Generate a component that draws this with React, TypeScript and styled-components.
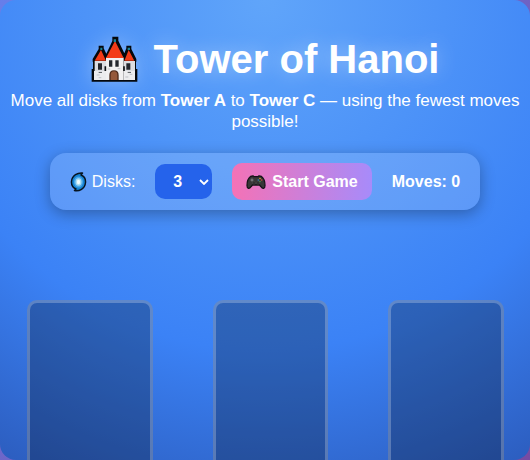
import React, { useState } from "react";
import styled, { createGlobalStyle } from "styled-components";

const GlobalStyle = createGlobalStyle`
  * { box-sizing: border-box; }
  body {
    margin: 0;
    min-height: 100vh;
    background: linear-gradient(135deg, #667eea 0%, #764ba2 100%);
    font-family: "Liberation Sans", Arial, sans-serif;
    color: #fff;
  }
`;

const Game = styled.main`
  display: flex;
  flex-direction: column;
  align-items: center;
  height: 100vh;
  overflow: hidden;
  border-radius: 16px;
  background: radial-gradient(circle at top, #60a5fa 0%, #3b82f6 66%, #1e3a8a 132%);
`;

const Title = styled.h1`
  display: flex;
  align-items: center;
  gap: 16px;
  margin: 36px 0 8px;
  font-size: 40px;
  line-height: 46px;
  text-shadow: 0 0 20px rgba(255, 255, 255, 0.4);
`;

const CastleIcon = styled.svg`
  width: 47px;
  height: 46px;
  filter: drop-shadow(0 0 10px rgba(255, 255, 255, 0.3));
`;

const Intro = styled.p`
  margin: 0 0 21px;
  font-size: 17px;
  line-height: 21px;
  text-align: center;
`;

const Controls = styled.section`
  display: flex;
  align-items: center;
  gap: 20px;
  padding: 10px 20px;
  border-radius: 16px;
  background: rgba(255, 255, 255, 0.15);
  box-shadow: 0 4px 15px rgba(0, 0, 0, 0.3);
  font-size: 16px;
  white-space: nowrap;
`;

const DiskLabel = styled.label`
  display: flex;
  align-items: center;
  gap: 5px;
`;

const SmallIcon = styled.svg<{ $width: number }>`
  width: ${({ $width }) => $width}px;
  height: 20px;
`;

const SelectBox = styled.div`
  display: grid;
  align-items: center;
  justify-items: end;

  & > * { grid-area: 1 / 1; }
  & > svg {
    margin-right: 3px;
    pointer-events: none;
  }
`;

const DiskSelect = styled.select`
  appearance: none;
  width: 57px;
  height: 35px;
  padding: 0 18px;
  border: 0;
  border-radius: 10px;
  background: #2563eb;
  color: #fff;
  font: bold 16px "Liberation Sans", Arial, sans-serif;
`;

const StartButton = styled.button`
  display: flex;
  align-items: center;
  gap: 6px;
  height: 37px;
  padding: 0 14px;
  border: 0;
  border-radius: 10px;
  background: linear-gradient(90deg, #f472b6, #a78bfa);
  color: #fff;
  font: bold 16px "Liberation Sans", Arial, sans-serif;
  cursor: pointer;
`;

const Moves = styled.output`
  font-weight: bold;
`;

const Towers = styled.section`
  display: grid;
  grid-template-columns: 126fr 115fr 116fr;
  gap: 60px;
  flex: 1;
  width: 100%;
  margin-top: 90px;
  padding: 0 26px 0 27px;
`;

const Tower = styled.div`
  height: 260px;
  border: 3px solid rgba(255, 255, 255, 0.24);
  border-radius: 10px;
  background: rgba(0, 0, 0, 0.25);
`;

const Castle = () => (
  <CastleIcon viewBox="40 31 141 138" aria-hidden="true">
    <path
      d="M42 168V130h4v-22h-1v-8l18-30V60h15v8l8 16 18-38V33h18v12l18 38 6-15v-8h15v10l15 30v8h-1v22h4v38Z"
      fill="#05080c"
    />
    <path d="M51 106h34v34H51Zm88 0h33v34h-33Z" fill="#dcdde1" />
    <path d="M85 96h53v67H85Z" fill="#f1f0f1" />
    <path d="M49 136h14v5h10v-5h12v27H49Zm89 0h12v5h10v-5h12v27h-34Z" fill="#ececee" />
    <path d="m51 105 19-32 15 32Zm34-8 27-51 26 51Zm55 8 13-32 17 32Z" fill="#f33b17" />
    <path d="M108 41h7v8h-7M68 66h6v7h-6m82-7h7v7h-7" fill="#17839a" />
    <path
      d="M94 104h10v19H94m19-19h10v19h-10M61 113h12v19H61m85-19h12v19h-12"
      fill="#24272d"
    />
    <path d="M83 122v14m56-14v14" stroke="#101216" strokeWidth="5" />
    <path d="M95 163v-15q0-14 14-14t14 14v15Z" fill="#4d2a1b" />
    <path d="M99 163v-15q0-11 10-11t10 11v15Z" fill="#95583a" />
    <path d="M57 148h9m-3 8h8m72-2h9m4-8h8M90 130h8m22-1h8" stroke="#bfc1c7" strokeWidth="3" />
  </CastleIcon>
);

const Cyclone = () => (
  <SmallIcon $width={17} viewBox="0 0 17 20" aria-hidden="true">
    <path
      d="M12.5 1C8 .5 2 3 1.5 9.5c-.3 4 2 6.500 4.500 7.500L4.500 18.500C9 19.500 15 17 15.500 10.500c.3-4-2-6.500-4.500-7.500Z"
      fill="#1683d3"
      stroke="#071521"
      strokeWidth="1.5"
      strokeLinejoin="round"
    />
    <ellipse cx="8.500" cy="10" rx="4.500" ry="5.500" fill="#4aa9ea" />
    <ellipse cx="8.500" cy="10" rx="3" ry="3.800" fill="#a9dcf5" />
    <ellipse cx="8.500" cy="10" rx="1.600" ry="2.200" fill="#effcff" />
  </SmallIcon>
);

const Gamepad = () => (
  <SmallIcon $width={20} viewBox="0 0 20 20" aria-hidden="true">
    <path
      d="M4.500 4.500 7 3.800l1 .9h4l1-.9 2.500.7c2 1.500 3.500 5.500 3.500 9 0 3.500-2.500 3.500-4 1.200L13.500 13h-7L5 14.700C3.500 17 1 17 1 13.500c0-3.500 1.500-7.500 3.500-9Z"
      fill="#373737"
      stroke="#161418"
      strokeWidth="1.3"
      strokeLinejoin="round"
    />
    <path d="M4.500 8h3M6 6.500v3" stroke="#85858b" />
    <circle cx="8" cy="11" r="1.200" fill="#171719" stroke="#5c5c60" strokeWidth=".5" />
    <circle cx="12" cy="11" r="1.200" fill="#171719" stroke="#5c5c60" strokeWidth=".5" />
    <circle cx="14" cy="6.500" r=".8" fill="#d9a32a" />
    <circle cx="15.700" cy="8" r=".8" fill="#d34f41" />
    <circle cx="12.300" cy="8" r=".8" fill="#2f8bc1" />
    <circle cx="14" cy="9.500" r=".8" fill="#4b9a4e" />
  </SmallIcon>
);

export default function App() {
  const [disks, setDisks] = useState("3");
  return (
    <>
      <GlobalStyle />
      <Game>
        <Title>
          <Castle />
          Tower of Hanoi
        </Title>
        <Intro>
          Move all disks from <strong>Tower A</strong> to <strong>Tower C</strong> — using the
          fewest moves possible!
        </Intro>
        <Controls aria-label="Game controls">
          <DiskLabel htmlFor="disks">
            <Cyclone />
            Disks:
          </DiskLabel>
          <SelectBox>
            <DiskSelect id="disks" value={disks} onChange={(e) => setDisks(e.target.value)}>
              {["3", "4", "5", "6", "7"].map((n) => (
                <option key={n}>{n}</option>
              ))}
            </DiskSelect>
            <svg width="10" height="6" viewBox="0 0 10 6" aria-hidden="true">
              <path d="m1 1 4 4 4-4" fill="none" stroke="#fff" strokeWidth="1.8" />
            </svg>
          </SelectBox>
          <StartButton type="button">
            <Gamepad />
            Start Game
          </StartButton>
          <Moves>Moves: 0</Moves>
        </Controls>
        <Towers aria-label="Towers">
          <Tower aria-label="Tower A" />
          <Tower aria-label="Tower B" />
          <Tower aria-label="Tower C" />
        </Towers>
      </Game>
    </>
  );
}
